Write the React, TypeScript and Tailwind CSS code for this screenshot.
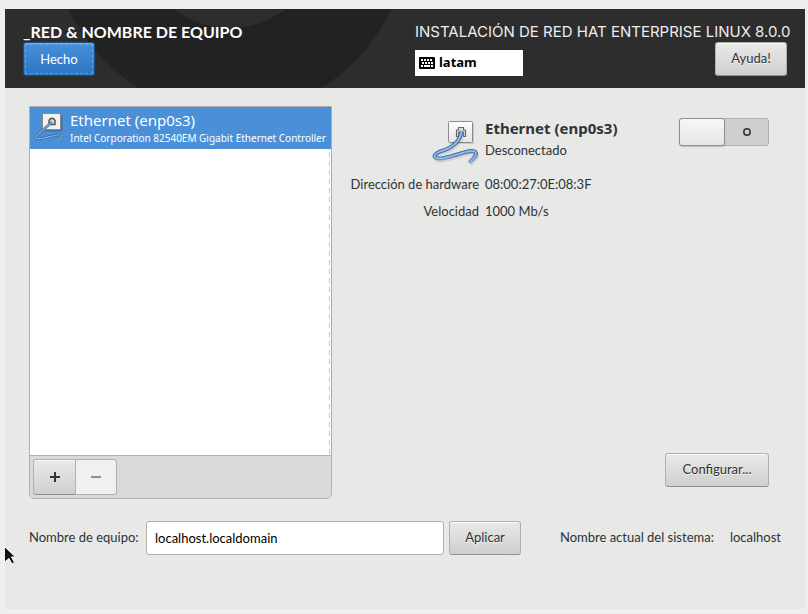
import { useState } from "react";

const raised =
  "h-[34px] rounded-[3px] border border-[#b0b0ad] border-b-[#8f8f8c] bg-linear-to-b from-[#e9e9e8] to-[#cfcfcd] pb-[2px] leading-5 text-[#2e3436] shadow-[inset_0_1px_0_#fafafa] [text-shadow:0_1px_#f4f4f4]";

function EthernetIcon() {
  const cable = "M30.500 13.500C29 24 21 30 9 33.500 1 37 2 41 10 40.500c10-1 22-7 31-7.500 7 0 4 6-3 11.500";
  return (
    <svg viewBox="0 0 48 48" className="size-12" aria-hidden="true">
      <defs>
        <linearGradient id="plate" x1="0" y1="0" x2="0" y2="1">
          <stop offset="0" stopColor="#fff" />
          <stop offset="1" stopColor="#e3e3e1" />
        </linearGradient>
        <linearGradient id="tail" gradientUnits="userSpaceOnUse" x1="0" y1="38" x2="0" y2="45">
          <stop offset="0" stopColor="#3465a4" />
          <stop offset="1" stopColor="#3465a4" stopOpacity="0.200" />
        </linearGradient>
      </defs>
      <rect x="18" y="5" width="25" height="21" rx="1" fill="#00000022" />
      <rect x="17.500" y="3.500" width="24" height="21" rx="1" fill="url(#plate)" stroke="#8b8d89" />
      <path d="M25.500 18.500v-6.500h2V9.500h5V12h2v6.500z" fill="#dcdddb" stroke="#6b6d69" strokeWidth="1.200" />
      <path d="M27.500 19v-5h5v5" fill="#fff" stroke="#7d7f7b" />
      <path d={cable} transform="translate(1 2)" fill="none" stroke="#00000018" strokeWidth="4" />
      <path d={cable} fill="none" stroke="url(#tail)" strokeWidth="4" />
      <path d={cable} fill="none" stroke="#729fcf" strokeWidth="2.400" />
      <path d={cable} fill="none" stroke="#a9c8ee" strokeWidth="1" />
    </svg>
  );
}

function SmallEthernetIcon() {
  const cable = "M18 11L4 23.500c-4 3-3 4.500 2 4 9-1 18-5 22-3.500 2 1 0 3-3 5";
  return (
    <svg viewBox="0 0 32 32" className="h-8 w-8 shrink-0" aria-hidden="true">
      <rect x="9.500" y="3.500" width="19" height="17" fill="#00000033" />
      <rect x="8.500" y="2.500" width="18" height="16" fill="#f2f2f1" stroke="#8b8d89" />
      <path d="M15 13.500V9.500l1.500-2h3l1.500 2v4z" fill="#d9dad7" stroke="#555753" strokeWidth="1.500" />
      <path d={cable} fill="none" stroke="#3465a4" strokeWidth="2.500" />
      <path d={cable} fill="none" stroke="#86aede" strokeWidth="1.200" />
    </svg>
  );
}

function KeyboardIcon() {
  return (
    <svg viewBox="0 0 16 12" className="h-3 w-4 shrink-0" aria-hidden="true">
      <rect width="16" height="12" rx="1" fill="#000" />
      <path
        d="M2 2h2v2H2zM5 2h2v2H5zM8 2h2v2H8zM11 2h2v2h-2zM3 5h2v2H3zM6 5h2v2H6zM9 5h2v2H9zM12 5h2v2h-2zM2 8h2v2H2zM5 8h6v2H5zM12 8h2v2h-2z"
        fill="#fff"
      />
    </svg>
  );
}

function Header() {
  return (
    <header className="relative flex h-[79px] justify-between overflow-hidden bg-[#2d2d2d] px-[18px] pt-3">
      <svg className="absolute top-0 left-0 h-[79px] w-[400px]" viewBox="0 0 400 79" aria-hidden="true">
        <circle cx="225" cy="-73" r="177" fill="#222" />
        <circle cx="225" cy="-73" r="92" fill="#2d2d2d" />
      </svg>
      <div className="relative">
        <h1 className="h-[21px] text-[16px] leading-[21px] font-bold whitespace-nowrap text-white">_RED &amp; NOMBRE DE EQUIPO</h1>
        <button
          type="button"
          className="h-[34px] w-[72px] rounded-[3px] border border-[#1c5187] bg-linear-to-b from-[#4a90d9] to-[#2a76c6] p-px leading-5 text-white shadow-[inset_0_1px_0_#77ade4]"
        >
          <span className="flex h-full items-center justify-center border border-dashed border-[#78ade3]/70">Hecho</span>
        </button>
      </div>
      <div className="relative w-[372px]">
        <p className="h-[21px] font-['Inter',sans-serif] text-[15px] leading-[21px] whitespace-nowrap text-[#eee]">
          INSTALACIÓN DE RED HAT ENTERPRISE LINUX 8.0.0
        </p>
        <div className="flex items-start justify-between">
          <button type="button" className="mt-2 flex h-[26px] w-[108px] items-center gap-1 bg-white px-1 font-['Noto_Sans',sans-serif] font-bold text-black">
            <KeyboardIcon />
            latam
          </button>
          <button type="button" className={`${raised} w-[72px]`}>Ayuda!</button>
        </div>
      </div>
    </header>
  );
}

function DeviceList() {
  return (
    <section className="flex w-[303px] shrink-0 flex-col overflow-hidden rounded-b-[5px] border border-[#b0b0ad] bg-white">
      <div className="relative flex-1">
        <button
          type="button"
          className="flex h-[42px] w-full gap-1 overflow-hidden bg-[#4a90d9] pt-1 pl-1 text-left font-['Noto_Sans',sans-serif] whitespace-nowrap text-white"
        >
          <SmallEthernetIcon />
          <span className="block">
            <span className="block text-[15px] leading-[19px]">Ethernet (enp0s3)</span>
            <span className="block text-[10px] leading-4">Intel Corporation 82540EM Gigabit Ethernet Controller</span>
          </span>
        </button>
        <div className="absolute inset-y-0 right-px w-px bg-[repeating-linear-gradient(#80808070_0_5px,transparent_5px_9px)]" />
      </div>
      <div className="flex h-[43px] border-t border-[#b0b0ad] bg-[#d9d9d7] p-[3px]">
        <button
          type="button"
          aria-label="Añadir"
          className="flex h-9 w-[43px] items-center justify-center rounded-l-[3px] border border-[#b0b0ad] border-b-[#8f8f8c] bg-linear-to-b from-[#e9e9e8] to-[#cfcfcd] shadow-[inset_0_1px_0_#fafafa]"
        >
          <svg viewBox="0 0 10 10" className="size-[10px]" aria-hidden="true">
            <path d="M4 0h2v4h4v2H6v4H4V6H0V4h4z" fill="#2e3436" />
          </svg>
        </button>
        <button
          type="button"
          disabled
          aria-label="Quitar"
          className="flex h-9 w-[41px] items-center justify-center rounded-r-[3px] border border-l-0 border-[#b0b0ad] bg-[#f0f0f0]"
        >
          <span className="h-[2px] w-[10px] bg-[#8d8f8e]" />
        </button>
      </div>
    </section>
  );
}

function DeviceDetails() {
  const [on, setOn] = useState(false);
  return (
    <section className="flex flex-1 flex-col justify-between pr-3 pb-3 pl-[18px]">
      <div className="flex items-start justify-between pt-3">
        <div>
          <div className="flex gap-[6px]">
            <div className="flex w-[129px] justify-end">
              <EthernetIcon />
            </div>
            <div className="whitespace-nowrap">
              <h2 className="font-['Noto_Sans',sans-serif] text-[15px] leading-5 font-bold">Ethernet (enp0s3)</h2>
              <p className="leading-6">Desconectado</p>
            </div>
          </div>
          <dl className="mt-[7px] grid grid-cols-[129px_auto] gap-x-[6px] gap-y-[5px] leading-[22px] whitespace-nowrap">
            <dt className="flex justify-end">Dirección de hardware</dt>
            <dd>08:00:27:0E:08:3F</dd>
            <dt className="flex justify-end">Velocidad</dt>
            <dd>1000 Mb/s</dd>
          </dl>
        </div>
        <label className="relative flex h-7 w-[90px] rounded-[3px] border border-[#b0b0ad] bg-[#cfcfce]">
          <input
            type="checkbox"
            role="switch"
            aria-label="Ethernet (enp0s3)"
            checked={on}
            onChange={(e) => setOn(e.target.checked)}
            className="peer sr-only"
          />
          <span className="-my-px -ml-px w-[46px] rounded-[3px] border border-[#8f8f8c] bg-linear-to-b from-[#f7f7f7] to-[#e6e6e5] shadow-[0_1px_1px_#00000030] peer-checked:order-last peer-checked:-mr-px peer-checked:ml-0" />
          <span className="flex flex-1 items-center justify-center">
            <svg viewBox="0 0 8 8" className="size-2" aria-hidden="true">
              <circle cx="4" cy="4" r="3.200" fill="none" stroke="#2e3436" strokeWidth="1.500" />
            </svg>
          </span>
        </label>
      </div>
      <div className="flex justify-end">
        <button type="button" className={`${raised} w-[104px]`}>Configurar...</button>
      </div>
    </section>
  );
}

function HostnameRow() {
  const [hostname, setHostname] = useState("localhost.localdomain");
  return (
    <form className="flex items-center pt-[22px] whitespace-nowrap" onSubmit={(e) => e.preventDefault()}>
      <label htmlFor="hostname" className="w-[117px] shrink-0">Nombre de equipo:</label>
      <input
        id="hostname"
        value={hostname}
        onChange={(e) => setHostname(e.target.value)}
        className="h-[34px] w-[298px] min-w-0 rounded-[3px] border border-[#b0b0ad] bg-white px-2 text-black"
      />
      <button type="submit" className={`${raised} ml-[5px] w-[72px] shrink-0`}>Aplicar</button>
      <p className="ml-auto flex gap-4">
        <span>Nombre actual del sistema:</span>
        <span>localhost</span>
      </p>
    </form>
  );
}

export default function App() {
  return (
    <div className="flex min-h-screen flex-col bg-[#efefef] pt-[9px] pr-[3px] pb-[5px] pl-[5px] font-['Lato','Noto_Sans',sans-serif] text-[13px] text-[#2e3436]">
      <div className="relative flex flex-1 flex-col overflow-hidden bg-[#e8e8e7]">
        <Header />
        <main className="flex flex-1 flex-col pt-[18px] pr-6 pb-[54px] pl-6">
          <div className="flex flex-1">
            <DeviceList />
            <DeviceDetails />
          </div>
          <HostnameRow />
        </main>
        <svg className="absolute bottom-[43px] left-0 h-[21px] w-3" viewBox="0 0 12 21" aria-hidden="true">
          <path d="M-1 1L10.500 12H6.500l3 5.500-2.500 1.500-3-5.500-5 4z" fill="#111" stroke="#fff" />
        </svg>
      </div>
    </div>
  );
}
